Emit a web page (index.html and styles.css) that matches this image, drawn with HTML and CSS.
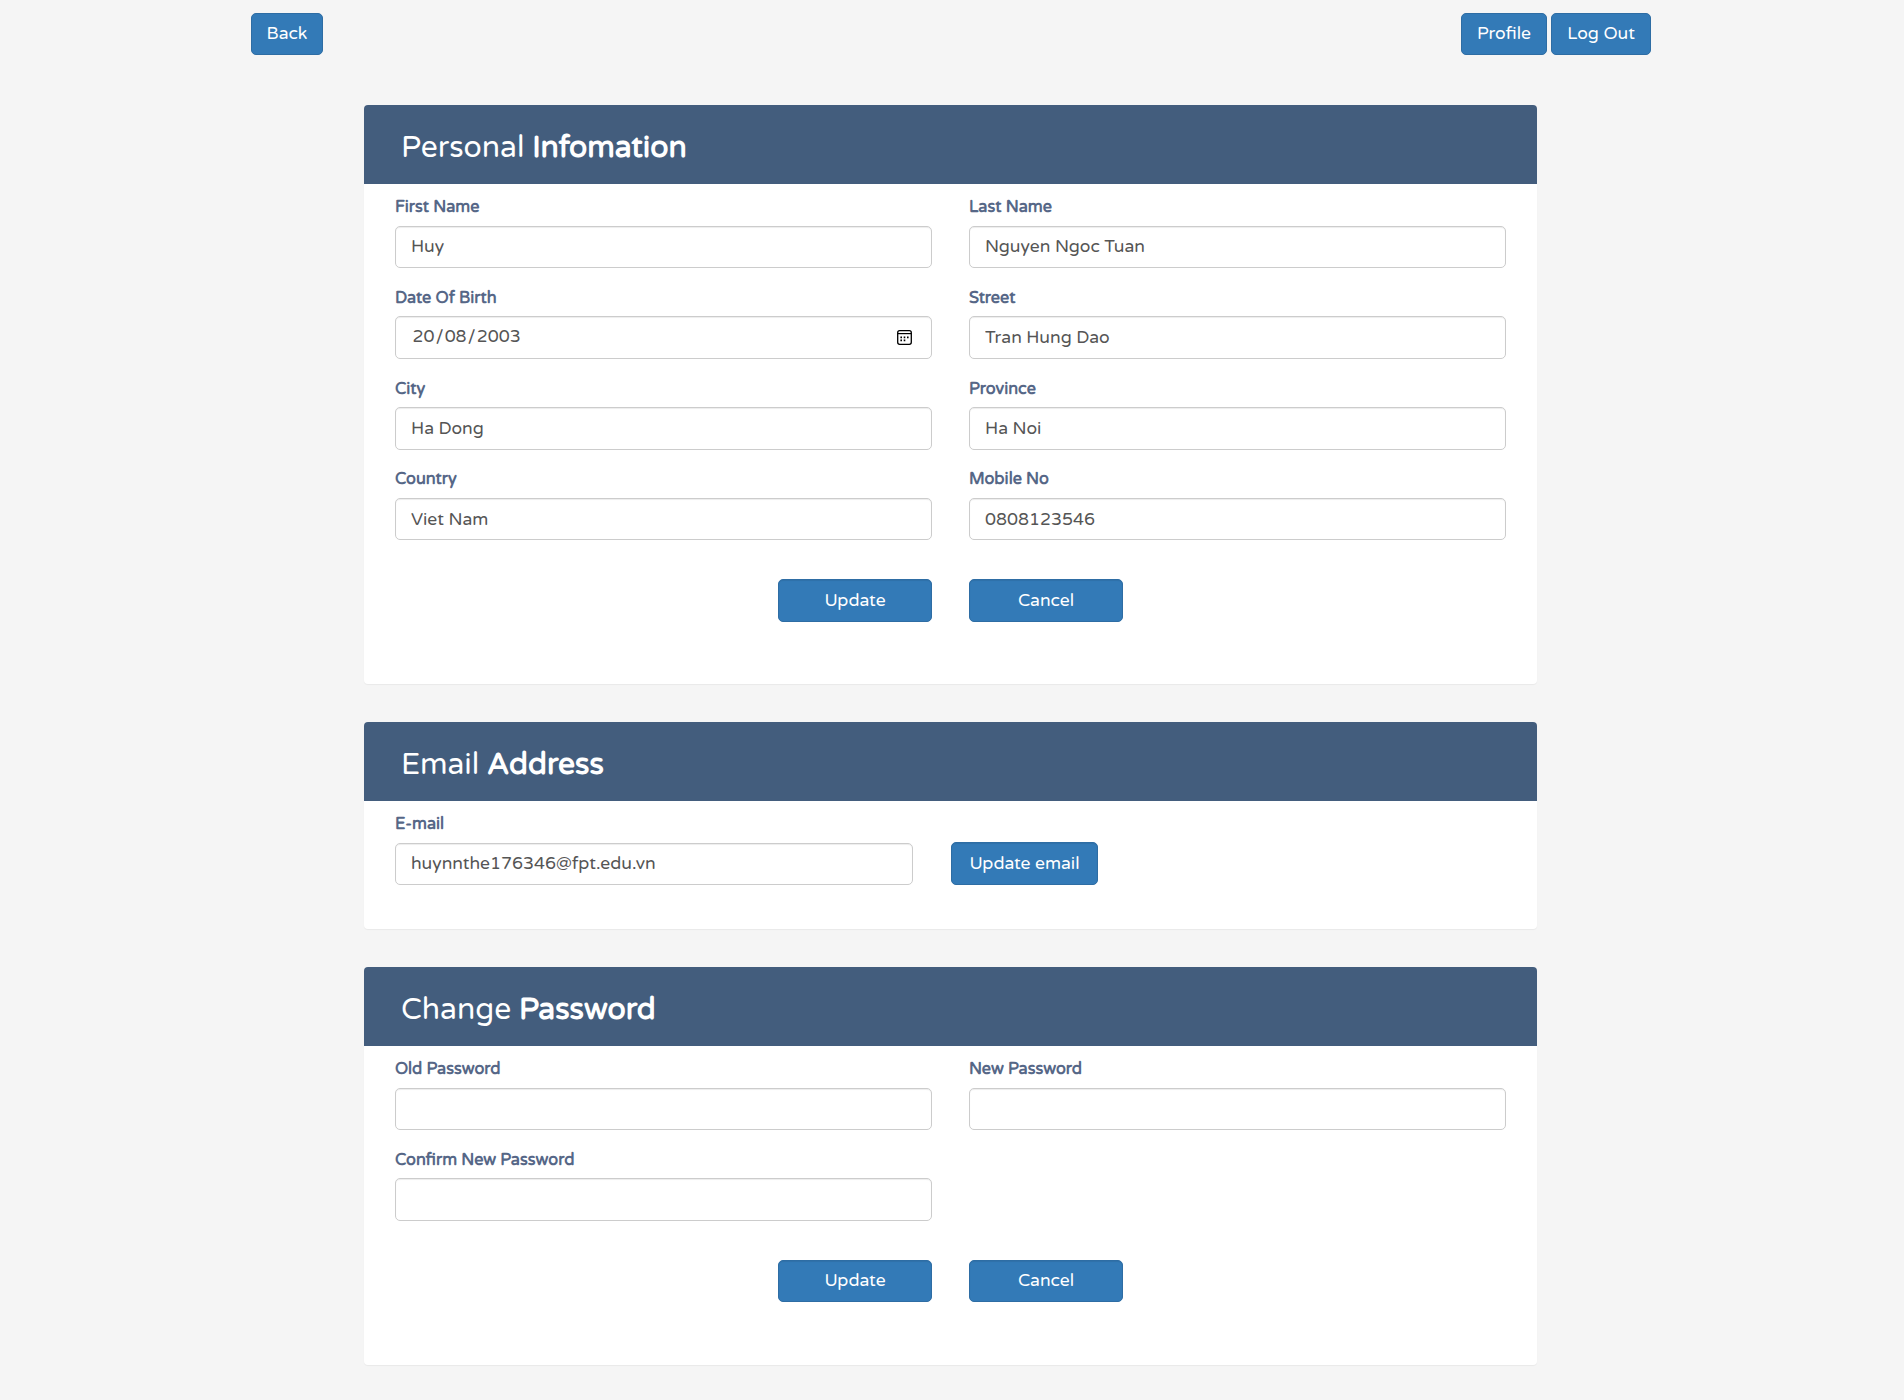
FILE: index.html
```html
<!DOCTYPE html>
<html lang="en">
<head>
<meta charset="utf-8">
<title>Profile</title>
<link rel="stylesheet" href="styles.css">
</head>
<body>
<nav class="topbar">
  <button class="btn btn-back">Back</button>
  <div class="topbar-right">
    <button class="btn btn-profile">Profile</button>
    <button class="btn btn-logout">Log Out</button>
  </div>
</nav>
<main class="page">
  <section class="card card-personal">
    <h2 class="card-title">Personal <b>Infomation</b></h2>
    <div class="fields">
      <label class="field"><span class="label">First Name</span><input class="control" type="text" value="Huy"></label>
      <label class="field"><span class="label">Last Name</span><input class="control" type="text" value="Nguyen Ngoc Tuan"></label>
      <div class="field"><span class="label">Date Of Birth</span>
        <div class="control control-date"><span class="date">20<i>/</i>08<i>/</i>2003</span>
          <svg class="calendar" width="17" height="17" viewBox="0 0 17 17">
            <rect x="1.7" y="1.7" width="13.6" height="13.6" rx="2" fill="none" stroke="#000" stroke-width="1.3"/>
            <path d="M1.7 4.6h13.6" stroke="#000" stroke-width="1.2"/>
            <path d="M4.4 7.6h1.6v1.6H4.4zM7.7 7.6h1.6v1.6H7.7zM11 7.6h1.6v1.6H11zM4.4 10.6h1.6v1.6H4.4zM7.7 10.6h1.6v1.6H7.7z" fill="#000"/>
          </svg>
        </div>
      </div>
      <label class="field"><span class="label">Street</span><input class="control" type="text" value="Tran Hung Dao"></label>
      <label class="field"><span class="label">City</span><input class="control" type="text" value="Ha Dong"></label>
      <label class="field"><span class="label">Province</span><input class="control" type="text" value="Ha Noi"></label>
      <label class="field"><span class="label">Country</span><input class="control" type="text" value="Viet Nam"></label>
      <label class="field"><span class="label">Mobile No</span><input class="control" type="text" value="0808123546"></label>
    </div>
    <div class="actions">
      <button class="btn btn-wide">Update</button>
      <button class="btn btn-wide">Cancel</button>
    </div>
  </section>
  <section class="card card-email">
    <h2 class="card-title">Email <b>Address</b></h2>
    <div class="email-row">
      <label class="field"><span class="label">E-mail</span><input class="control" type="text" value="huynnthe176346@fpt.edu.vn"></label>
      <button class="btn btn-email">Update email</button>
    </div>
  </section>
  <section class="card card-password">
    <h2 class="card-title">Change <b>Password</b></h2>
    <div class="fields">
      <label class="field"><span class="label">Old Password</span><input class="control" type="password"></label>
      <label class="field"><span class="label">New Password</span><input class="control" type="password"></label>
      <label class="field"><span class="label">Confirm New Password</span><input class="control" type="password"></label>
    </div>
    <div class="actions">
      <button class="btn btn-wide">Update</button>
      <button class="btn btn-wide">Cancel</button>
    </div>
  </section>
</main>
</body>
</html>
```
FILE: styles.css
```css
* { box-sizing: border-box; }

body {
  margin: 0;
  min-height: 1400px;
  background: #f5f5f5;
  color: #555;
  font-family: "Varela Round", "Noto Sans", sans-serif;
  font-size: 17.5px;
}

.topbar {
  display: flex;
  justify-content: space-between;
  width: 1400px;
  margin-left: 251px;
  padding-top: 13px;
}
.topbar-right { display: flex; gap: 4px; }

.btn {
  height: 42px;
  padding: 0 0 2px;
  border: 1px solid #2e6da4;
  border-radius: 5px;
  background: #337ab7;
  color: #fff;
  font: inherit;
  white-space: nowrap;
}
.btn-back { width: 72px; }
.btn-profile { width: 86px; }
.btn-logout { width: 100px; }
.btn-wide,
.btn-email {
  padding-bottom: 1px;
  box-shadow: inset 0 1px 1px rgba(0, 0, 0, .075);
}
.btn-wide { width: 154px; height: 42.5px; }
.btn-email { width: 147px; height: 43px; padding-bottom: 0; }

.page {
  display: flex;
  flex-direction: column;
  gap: 38px;
  width: 1173px;
  margin: 50px 0 0 364px;
}

.card {
  background: #fff;
  border-radius: 4px;
  box-shadow: 0 1px 1px rgba(0, 0, 0, .05);
}
.card-personal { height: 579px; }
.card-email { height: 207px; }
.card-password { height: 398px; }

.card-title {
  height: 79px;
  margin: 0;
  padding: 0 37px;
  border-radius: 4px 4px 0 0;
  background: #435d7d;
  color: #fff;
  font-size: 30px;
  font-weight: 400;
  line-height: 86px;
}
.card-title b { font-weight: 700; }

.fields {
  display: grid;
  grid-template-columns: 537px 537px;
  grid-auto-rows: 90.8px;
  column-gap: 37px;
  padding: 11px 31px 0;
}
.field { display: block; }
.label {
  display: block;
  margin-bottom: 6.6px;
  color: #566787;
  font-size: 16.25px;
  font-weight: 700;
  line-height: 24px;
}
.control {
  display: block;
  width: 100%;
  height: 42.4px;
  padding: 0 15px;
  border: 1px solid #ccc;
  border-radius: 5px;
  background: #fff;
  box-shadow: inset 0 1px 1px rgba(0, 0, 0, .075);
  color: #555;
  font: inherit;
}
.control-date {
  display: flex;
  align-items: center;
  justify-content: space-between;
  padding: 0 18px 0 16.5px;
}
.date { padding-bottom: 3px; }
.date i { padding: 0 1.2px; font-style: normal; }

.actions {
  display: flex;
  justify-content: center;
  gap: 37px;
  padding-top: 21.1px;
}

.email-row {
  display: flex;
  align-items: flex-end;
  gap: 38px;
  padding: 11px 31px 0;
}
.email-row .field { width: 518px; }
```
